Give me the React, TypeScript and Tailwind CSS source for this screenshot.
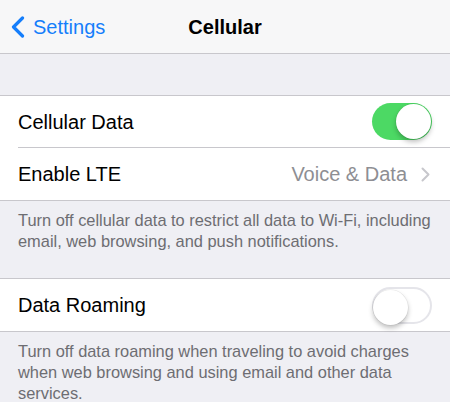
import React from "react";

const font = { fontFamily: '"Liberation Sans", Arial, sans-serif' };

function Toggle({ on }: { on: boolean }) {
  return (
    <div
      className={`relative h-[37px] w-[60px] rounded-full ${
        on ? "bg-[#4cd964]" : "bg-white border-2 border-[#e5e5ea]"
      }`}
    >
      <div
        className={`absolute top-[1px] h-[35px] w-[35px] rounded-full bg-white shadow-[0_3px_5px_rgba(0,0,0,0.25),0_0_0_0.5px_rgba(0,0,0,0.08)] ${
          on ? "right-[1px]" : "left-[-1px] top-[-1px]"
        }`}
      />
    </div>
  );
}

function Row({ children, last }: { children: React.ReactNode; last?: boolean }) {
  return (
    <div className="pl-[18px] bg-white">
      <div
        className={`flex h-[52px] items-center justify-between pr-[18px] ${
          last ? "" : "border-b border-[#c8c7cc]"
        }`}
      >
        {children}
      </div>
    </div>
  );
}

export default function App() {
  return (
    <div className="h-[402px] w-[450px] overflow-hidden bg-[#efeff4]" style={font}>
      {/* Nav bar */}
      <div className="relative flex h-[54px] items-center border-b border-[#c8c7cc] bg-[#f7f7f8]">
        <div className="flex items-center pl-[10px] text-[#157efb]">
          <svg width="15" height="22" viewBox="0 0 15 22" fill="none">
            <path d="M12.5 2 L3.5 11 L12.5 20" stroke="#157efb" strokeWidth="3.2" strokeLinecap="round" strokeLinejoin="round" />
          </svg>
          <span className="ml-[8px] text-[20px] leading-none">Settings</span>
        </div>
        <div className="absolute inset-x-0 text-center text-[20px] font-bold leading-none text-black pointer-events-none">
          Cellular
        </div>
      </div>

      <div className="h-[41px]" />

      <div className="border-y border-[#c8c7cc]">
        <Row>
          <span className="text-[20px] text-black">Cellular Data</span>
          <Toggle on />
        </Row>
        <Row last>
          <span className="text-[20px] text-black">Enable LTE</span>
          <div className="flex items-center gap-[14px]">
            <span className="text-[20px] text-[#8e8e93]">Voice &amp; Data</span>
            <svg width="9" height="15" viewBox="0 0 9 15" fill="none" className="mr-[2px]">
              <path d="M1.5 1.5 L7.5 7.5 L1.5 13.5" stroke="#c7c7cc" strokeWidth="2" strokeLinecap="round" strokeLinejoin="round" />
            </svg>
          </div>
        </Row>
      </div>

      <p className="px-[18px] pt-[9px] pb-[26px] text-[16.4px] leading-[21px] text-[#6d6d72]">
        Turn off cellular data to restrict all data to Wi-Fi, including email, web browsing, and push notifications.
      </p>

      <div className="border-y border-[#c8c7cc]">
        <Row last>
          <span className="text-[20px] text-black">Data Roaming</span>
          <Toggle on={false} />
        </Row>
      </div>

      <p className="px-[18px] pt-[9px] text-[16.4px] leading-[21px] text-[#6d6d72]">
        Turn off data roaming when traveling to avoid charges when web browsing and using email and other data services.
      </p>
    </div>
  );
}
